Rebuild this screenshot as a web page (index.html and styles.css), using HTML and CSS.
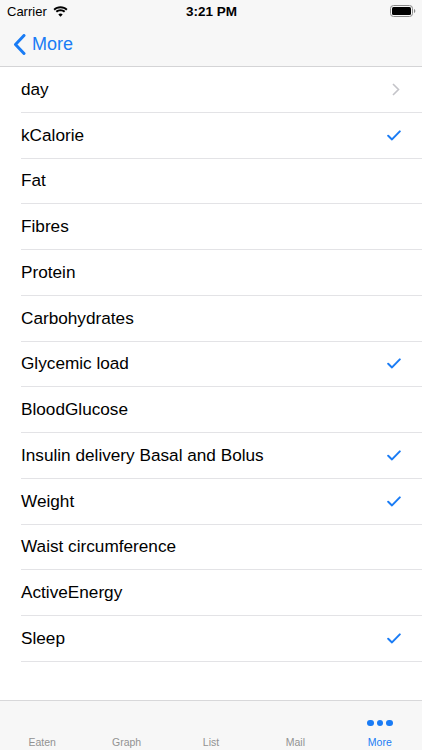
FILE: index.html
```html
<!DOCTYPE html>
<html>
<head>
    <meta charset="utf-8">
    <link rel="stylesheet" href="styles.css">
</head>
<body>
    <div class="screen">
        <div class="statusbar">
            <div class="carrier">
                Carrier
                <svg class="wifi" width="15" height="11" viewBox="0 0 15 11">
                    <path d="M7.5 2.2c2.2 0 4.2.8 5.7 2.2l1.3-1.4C12.6 1.2 10.2.2 7.5.2S2.4 1.2.5 3l1.3 1.4c1.5-1.4 3.5-2.2 5.7-2.2z" fill="#000"/>
                    <path d="M7.5 5.2c1.3 0 2.5.5 3.5 1.3l1.3-1.4C11 3.9 9.3 3.2 7.5 3.2S4 3.9 2.7 5.1L4 6.5c1-.8 2.2-1.3 3.5-1.3z" fill="#000"/>
                    <path d="M7.5 10.8l2.2-2.4c-.6-.5-1.4-.8-2.2-.8s-1.6.3-2.2.8z" fill="#000"/>
                </svg>
            </div>
            <div class="clock">3:21 PM</div>
            <div class="battery">
                <svg width="26" height="12" viewBox="0 0 26 12">
                    <rect x="0.5" y="0.5" width="22" height="11" rx="3" fill="none" stroke="#8a8a8a"/>
                    <rect x="2" y="2" width="19" height="8" rx="1.5" fill="#000"/>
                    <path d="M24 4v4c.8-.3 1.3-1 1.3-2s-.5-1.7-1.3-2z" fill="#8a8a8a"/>
                </svg>
            </div>
        </div>

        <div class="navbar">
            <a class="back">
                <svg width="13" height="21" viewBox="0 0 13 21">
                    <path d="M11 1.5L2.5 10.5L11 19.5" fill="none" stroke="#1a7cf5" stroke-width="3" stroke-linecap="round" stroke-linejoin="round"/>
                </svg>
                More
            </a>
        </div>

        <ul class="list">
            <li class="row">day
                <svg class="chevron" width="8" height="13" viewBox="0 0 8 13"><path d="M1 1l5.5 5.5L1 12" fill="none" stroke="#c4c4c9" stroke-width="1.6"/></svg>
            </li>
            <li class="row">kCalorie
                <svg class="check" width="14" height="11" viewBox="0 0 14 11"><path d="M1.2 5.8l3.8 3.6L12.8 1.4" fill="none" stroke="#1a7cf5" stroke-width="2" stroke-linecap="round" stroke-linejoin="round"/></svg>
            </li>
            <li class="row">Fat</li>
            <li class="row">Fibres</li>
            <li class="row">Protein</li>
            <li class="row">Carbohydrates</li>
            <li class="row">Glycemic load
                <svg class="check" width="14" height="11" viewBox="0 0 14 11"><path d="M1.2 5.8l3.8 3.6L12.8 1.4" fill="none" stroke="#1a7cf5" stroke-width="2" stroke-linecap="round" stroke-linejoin="round"/></svg>
            </li>
            <li class="row">BloodGlucose</li>
            <li class="row">Insulin delivery Basal and Bolus
                <svg class="check" width="14" height="11" viewBox="0 0 14 11"><path d="M1.2 5.8l3.8 3.6L12.8 1.4" fill="none" stroke="#1a7cf5" stroke-width="2" stroke-linecap="round" stroke-linejoin="round"/></svg>
            </li>
            <li class="row">Weight
                <svg class="check" width="14" height="11" viewBox="0 0 14 11"><path d="M1.2 5.8l3.8 3.6L12.8 1.4" fill="none" stroke="#1a7cf5" stroke-width="2" stroke-linecap="round" stroke-linejoin="round"/></svg>
            </li>
            <li class="row">Waist circumference</li>
            <li class="row">ActiveEnergy</li>
            <li class="row">Sleep
                <svg class="check" width="14" height="11" viewBox="0 0 14 11"><path d="M1.2 5.8l3.8 3.6L12.8 1.4" fill="none" stroke="#1a7cf5" stroke-width="2" stroke-linecap="round" stroke-linejoin="round"/></svg>
            </li>
        </ul>

        <div class="tabbar">
            <div class="tab">Eaten</div>
            <div class="tab">Graph</div>
            <div class="tab">List</div>
            <div class="tab">Mail</div>
            <div class="tab active">
                <span class="dots"><i></i><i></i><i></i></span>
                More
            </div>
        </div>
    </div>
</body>
</html>
```

FILE: styles.css
```css
/* iOS style settings list */

html, body {
    margin: 0;
    padding: 0;
    background: #ffffff;
}

.screen {
    width: 422px;
    height: 750px;
    display: flex;
    flex-direction: column;
    font-family: "Liberation Sans", Arial, sans-serif;
    color: #000;
    overflow: hidden;
}

.statusbar {
    height: 22px;
    background: #f7f7f7;
    display: grid;
    grid-template-columns: 1fr auto 1fr;
    align-items: center;
    padding: 0 6px 0 7px;
    font-size: 13px;
}

.carrier {
    display: flex;
    align-items: center;
    gap: 6px;
}

.clock {
    font-weight: bold;
    font-size: 13.5px;
}

.battery {
    display: flex;
    justify-content: flex-end;
}

.navbar {
    height: 44px;
    background: #f7f7f7;
    border-bottom: 1px solid #d4d4d6;
    display: flex;
    align-items: center;
    padding-left: 13px;
}

.back {
    display: flex;
    align-items: center;
    gap: 6px;
    color: #1a7cf5;
    font-size: 18px;
}

.list {
    list-style: none;
    margin: 0;
    padding: 0;
    flex: 1;
}

.row {
    height: 45.75px;
    box-sizing: border-box;
    margin-left: 21px;
    padding-right: 21px;
    border-bottom: 1px solid #e3e3e6;
    display: flex;
    align-items: center;
    justify-content: space-between;
    font-size: 17.2px;
}

.chevron {
    margin-right: 1px;
}

.tabbar {
    height: 50px;
    box-sizing: border-box;
    background: #f7f7f7;
    border-top: 1px solid #d8d8da;
    display: grid;
    grid-template-columns: repeat(5, 1fr);
}

.tab {
    display: flex;
    flex-direction: column;
    align-items: center;
    justify-content: flex-end;
    padding-bottom: 2px;
    font-size: 10.5px;
    color: #929292;
}

.tab.active {
    color: #1a7cf5;
}

.dots {
    display: flex;
    gap: 3px;
    margin-bottom: 10px;
}

.dots i {
    width: 6.5px;
    height: 6.5px;
    border-radius: 50%;
    background: #1a7cf5;
}
```
